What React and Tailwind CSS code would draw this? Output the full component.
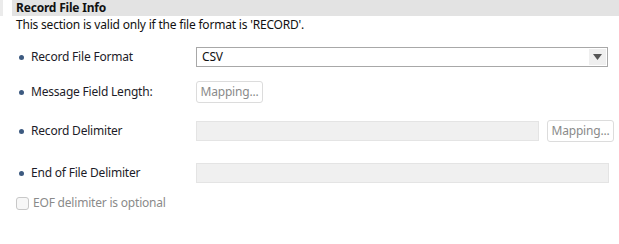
export default function App() {
  const font = { fontFamily: '"Noto Sans", "Liberation Sans", sans-serif' };

  const Label = ({ children }) => (
    <div className="flex items-center w-[180px] pl-[3px]">
      <span className="w-[5px] h-[5px] rounded-full bg-[#3d5a80] mr-[7px]" />
      <span className="text-[#1c1c28]">{children}</span>
    </div>
  );

  const MappingButton = () => (
    <button className="w-[67px] h-[22px] border border-[#dcdcdc] rounded-[3px] bg-white text-[#8a8a8a] leading-none text-center">
      Mapping...
    </button>
  );

  return (
    <div className="w-[619px] h-[244px] bg-white text-[12px] tracking-[-0.2px] overflow-hidden" style={font}>
      <div className="flex h-4">
        <div className="w-[3px] bg-[#ebebeb]" />
        <div className="w-[9px]" />
        <div className="flex-1 bg-[#e3e3e3] flex items-center pl-1 font-bold text-[#111] leading-none">
          Record File Info
        </div>
      </div>
      <div className="pl-4 leading-[18px] text-[#111]">
        This section is valid only if the file format is 'RECORD'.
      </div>

      <div className="pl-4">
        <div className="flex items-center h-5 mt-[13px]">
          <Label>Record File Format</Label>
          <div className="w-[412px] h-5 border border-[#a8a8a8] flex items-center justify-between pl-[5px] pr-[1px] text-[#111]">
            <span>CSV</span>
            <div className="w-[17px] h-4 bg-[#efefef] flex items-center justify-center">
              <svg width="9" height="6" viewBox="0 0 9 6">
                <polygon points="0,0 9,0 4.5,6" fill="#555" />
              </svg>
            </div>
          </div>
        </div>

        <div className="flex items-center h-[22px] mt-[14px]">
          <Label>Message Field Length:</Label>
          <MappingButton />
        </div>

        <div className="flex items-center h-[22px] mt-[17px]">
          <Label>Record Delimiter</Label>
          <div className="w-[343px] h-5 border border-[#e4e4e4] bg-[#f0f0f0]" />
          <div className="ml-[8px] flex">
            <MappingButton />
          </div>
        </div>

        <div className="flex items-center h-5 mt-[21px]">
          <Label>End of File Delimiter</Label>
          <div className="w-[413px] h-5 border border-[#e4e4e4] bg-[#f0f0f0]" />
        </div>

        <div className="flex items-center h-[14px] mt-[13px]">
          <span className="w-[13px] h-[13px] border border-[#c8c8c8] rounded-[3px] bg-[#f7f7f7] mr-[4px]" />
          <span className="text-[#8a8a8a]">EOF delimiter is optional</span>
        </div>
      </div>
    </div>
  );
}
